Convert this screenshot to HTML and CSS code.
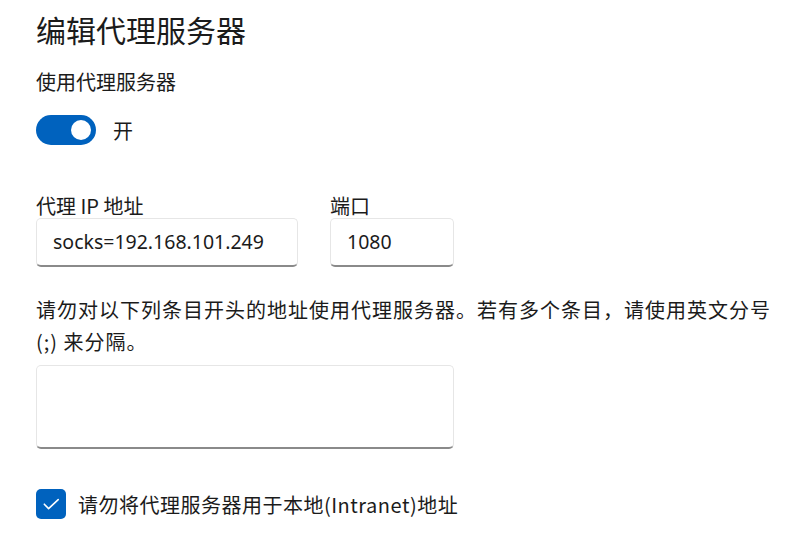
FILE: index.html
```html
<!DOCTYPE html>
<html lang="zh-CN">
<head>
<meta charset="utf-8">
<link rel="stylesheet" href="styles.css">
</head>
<body>
<main class="page">
  <h1 class="title">编辑代理服务器</h1>
  <div class="label sub">使用代理服务器</div>
  <div class="toggle-row">
    <span class="toggle"><span class="knob"></span></span>
    <span class="toggle-text">开</span>
  </div>
  <div class="fields">
    <div class="field ip">
      <div class="label">代理 IP 地址</div>
      <div class="input">socks=192.168.101.249</div>
    </div>
    <div class="field port">
      <div class="label">端口</div>
      <div class="input">1080</div>
    </div>
  </div>
  <p class="desc">请勿对以下列条目开头的地址使用代理服务器。若有多个条目，请使用英文分号 (;) 来分隔。</p>
  <div class="textarea"></div>
  <div class="check-row">
    <span class="checkbox">
      <svg width="30" height="30" viewBox="0 0 30 30"><path d="M8.3 15.2 L12.6 19.6 L22.2 10.6" fill="none" stroke="#fff" stroke-width="1.6" stroke-linecap="round" stroke-linejoin="round"/></svg>
    </span>
    <span class="check-text">请勿将代理服务器用于本地(Intranet)地址</span>
  </div>
</main>
</body>
</html>
```
FILE: styles.css
```css
html, body {
  margin: 0;
  padding: 0;
  background: #ffffff;
}
body {
  font-family: "Noto Sans", "Noto Sans CJK SC", sans-serif;
  color: #1b1b1b;
}
.page {
  padding: 9px 0 0 36px;
  width: 740px;
}
.title {
  margin: 0;
  font-family: "Noto Sans CJK SC", sans-serif;
  font-weight: 400;
  font-size: 30px;
  line-height: 40px;
}
.label {
  font-family: "Noto Sans CJK SC", sans-serif;
  font-size: 20px;
  line-height: 28px;
}
.sub {
  margin-top: 19px;
}
.toggle-row {
  display: flex;
  align-items: center;
  margin-top: 19px;
  height: 30px;
}
.toggle {
  width: 60px;
  height: 30px;
  border-radius: 15px;
  background: #0062be;
  display: flex;
  align-items: center;
  justify-content: flex-end;
  padding-right: 5px;
  box-sizing: border-box;
}
.knob {
  width: 20px;
  height: 20px;
  border-radius: 50%;
  background: #fff;
}
.toggle-text {
  margin-left: 17px;
  font-family: "Noto Sans CJK SC", sans-serif;
  font-size: 20px;
}
.fields {
  display: flex;
  gap: 32px;
  margin-top: 48px;
}
.field .label {
  line-height: 25px;
}
.input {
  box-sizing: border-box;
  height: 49px;
  border: 1px solid #e6e6e6;
  border-bottom: 2px solid #8a8a8a;
  border-radius: 5px;
  background: #fff;
  padding: 0 0 0 16px;
  font-size: 19.5px;
  line-height: 46px;
  color: #1b1b1b;
}
.ip .input { width: 262px; }
.port .input { width: 124px; }
.desc {
  margin: 27px 0 0;
  font-family: "Noto Sans CJK SC", sans-serif;
  font-size: 20px;
  line-height: 32px;
  letter-spacing: 1px;
}
.textarea {
  box-sizing: border-box;
  width: 418px;
  height: 84px;
  margin-top: 7px;
  border: 1px solid #e6e6e6;
  border-bottom: 2px solid #8a8a8a;
  border-radius: 5px;
  background: #fff;
}
.check-row {
  display: flex;
  align-items: center;
  margin-top: 40px;
}
.checkbox {
  width: 30px;
  height: 30px;
  border-radius: 5px;
  background: #0062be;
  display: flex;
  align-items: center;
  justify-content: center;
}
.check-text {
  margin-left: 12px;
  font-family: "Noto Sans CJK SC", sans-serif;
  font-size: 20px;
  letter-spacing: 0.5px;
}
```
